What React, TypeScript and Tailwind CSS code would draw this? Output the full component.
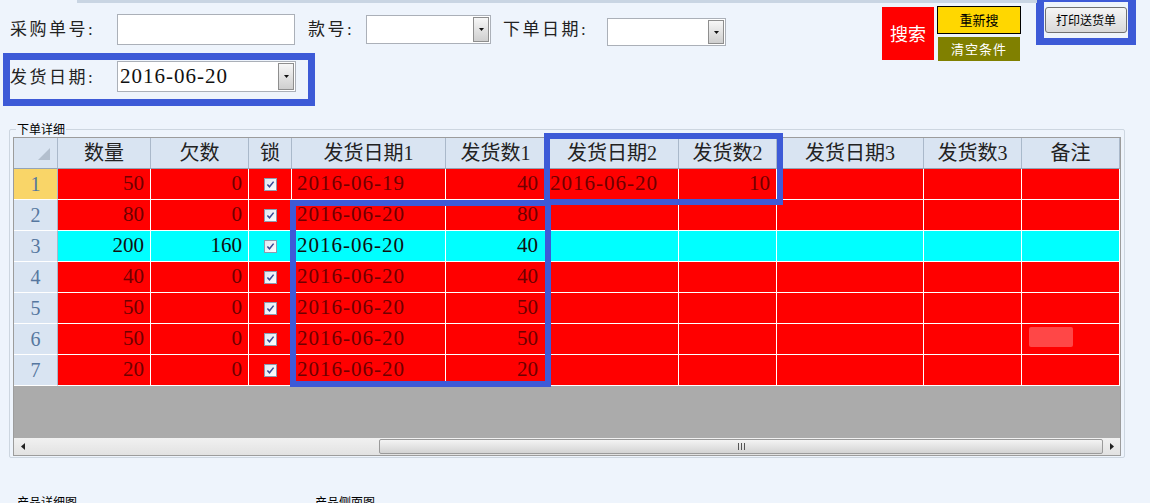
import React from 'react'

type Row = { q: string; o: string; d1: string; n1: string; d2?: string; n2?: string; cyan?: boolean; blob?: boolean }

const rows: Row[] = [
  { q: '50', o: '0', d1: '2016-06-19', n1: '40', d2: '2016-06-20', n2: '10' },
  { q: '80', o: '0', d1: '2016-06-20', n1: '80' },
  { q: '200', o: '160', d1: '2016-06-20', n1: '40', cyan: true },
  { q: '40', o: '0', d1: '2016-06-20', n1: '40' },
  { q: '50', o: '0', d1: '2016-06-20', n1: '50' },
  { q: '50', o: '0', d1: '2016-06-20', n1: '50', blob: true },
  { q: '20', o: '0', d1: '2016-06-20', n1: '20' },
]

const headers = ['数量', '欠数', '锁', '发货日期1', '发货数1', '发货日期2', '发货数2', '发货日期3', '发货数3', '备注']

const FONT = { fontFamily: '"Liberation Serif", "Noto Sans CJK SC", serif' }

function DropBtn() {
  return (
    <div className="my-[1px] mr-[1px] flex w-[16px] items-center justify-center border border-[#8e8e8e] bg-gradient-to-b from-[#f7f7f7] to-[#cfcfcf]">
      <svg width="5" height="3" viewBox="0 0 5 3">
        <polygon points="0,0 5,0 2.5,3" fill="#111" />
      </svg>
    </div>
  )
}

function Check() {
  return (
    <svg width="13" height="13" viewBox="0 0 13 13">
      <defs>
        <linearGradient id="cb" x1="0" y1="0" x2="1" y2="1">
          <stop offset="0" stopColor="#dfe6f0" />
          <stop offset="1" stopColor="#ffffff" />
        </linearGradient>
      </defs>
      <rect x="0.5" y="0.5" width="12" height="12" fill="url(#cb)" stroke="#8d9bb0" />
      <path d="M3.4 6.4 L5.5 8.8 L9.6 3.6" fill="none" stroke="#3a4a96" strokeWidth="1.5" />
    </svg>
  )
}

function Cell({ children, className = '' }: { children?: React.ReactNode; className?: string }) {
  return <div className={`flex h-[31px] items-center border-r border-b border-white ${className}`}>{children}</div>
}

export default function App() {
  return (
    <div className="relative h-[503px] w-[1150px] overflow-hidden bg-[#eef4fc] text-[#222]" style={FONT}>
      <div className="absolute top-0 left-[77px] h-[3px] w-[960px] bg-[#c9d5e3]" />

      {/* top area */}
      <div className="flex items-start">
        <div className="w-[882px] shrink-0 pl-[3px] pt-[14px]">
          <div className="flex h-[31px] items-center pl-[7px] text-[17px] tracking-[2.5px]">
            <span className="w-[107px]">采购单号:</span>
            <div className="h-[31px] w-[178px] border border-[#abb0b8] bg-white" />
            <span className="ml-[13px] w-[58px]">款号:</span>
            <div className="flex h-[29px] w-[125px] border border-[#abb0b8] bg-white">
              <div className="flex-1" />
              <DropBtn />
            </div>
            <span className="ml-[12px] w-[104px]">下单日期:</span>
            <div className="mt-[5px] flex h-[28px] w-[119px] border border-[#abb0b8] bg-white">
              <div className="flex-1" />
              <DropBtn />
            </div>
          </div>
          <div className="mt-[8px] flex h-[53px] w-[312px] items-start border-[7px] border-[#3d5ad7] pt-[1px] text-[17px]">
            <span className="mt-[4px] w-[107px] tracking-[2.5px]">发货日期:</span>
            <div className="flex h-[31px] w-[179px] border border-[#abb0b8] bg-white">
              <div className="flex flex-1 items-center pl-[2px] text-[21px] tracking-[1px] text-[#111]">2016-06-20</div>
              <DropBtn />
            </div>
          </div>
        </div>

        <div className="mt-[7px] flex h-[53px] w-[52px] items-center justify-center bg-[#ff0000] text-[18px] text-white" style={{ fontFamily: '"Noto Sans CJK SC", sans-serif' }}>
          搜索
        </div>
        <div className="ml-[3px] flex flex-col" style={{ fontFamily: '"Noto Sans CJK SC", sans-serif' }}>
          <div className="mt-[6px] flex h-[28px] w-[84px] items-center justify-center border border-black bg-[#ffd700] text-[13px] text-black">重新搜</div>
          <div className="mt-[3px] ml-[1px] flex h-[24px] w-[82px] items-center justify-center bg-[#808000] text-[13px] tracking-[1px] text-white">清空条件</div>
        </div>
        <div className="ml-[15px] flex h-[45px] w-[100px] items-start border-x-[8px] border-t-[2px] border-b-[7px] border-[#3d5ad7] bg-[#eef4fc] pt-[5px] pl-[1px]">
          <div className="flex h-[26px] w-[82px] items-center justify-center rounded-[3px] border border-[#707070] bg-gradient-to-b from-[#f5f5f5] to-[#d9d9d9] text-[12px] text-black" style={{ fontFamily: '"Noto Sans CJK SC", sans-serif' }}>
            打印送货单
          </div>
        </div>
      </div>

      {/* group box */}
      <div className="relative mt-[23px] ml-[9px] w-[1116px] rounded-[2px] border border-[#cdd6e0] pt-[7px] pb-[1px] pl-[3px]">
        <span className="absolute -top-[9px] left-[6px] bg-[#eef4fc] px-[1px] text-[12px] leading-[16px] text-black" style={{ fontFamily: '"Noto Sans CJK SC", sans-serif' }}>
          下单详细
        </span>
        <div className="w-[1108px] border border-[#9c9c9c]">
          <div className="grid grid-cols-[44px_93px_98px_43px_154px_100px_133px_98px_147px_98px_98px]">
            <div className="relative h-[31px] border-r border-b border-r-[#aab8ca] border-b-[#93a3b6] bg-[#d9e4f2]">
              <svg className="absolute top-[10px] left-[24px]" width="12" height="12" viewBox="0 0 12 12">
                <polygon points="12,0 12,12 0,12" fill="#b3bfce" />
              </svg>
            </div>
            {headers.map(h => (
              <div key={h} className="flex h-[31px] items-center justify-center border-r border-b border-r-[#aab8ca] border-b-[#93a3b6] bg-[#d9e4f2] text-[20px] text-[#222]">
                {h}
              </div>
            ))}

            {rows.map((r, i) => {
              const bg = r.cyan ? 'bg-[#00ffff] text-[#111]' : 'bg-[#ff0000] text-[#6e0000]'
              return (
                <React.Fragment key={i}>
                  <div className={`flex h-[31px] items-center justify-center border-r border-b border-r-[#aab8ca] border-b-white text-[20px] text-[#56779f] ${i === 0 ? 'bg-[#f9d568]' : 'bg-[#d9e4f2]'}`}>
                    {i + 1}
                  </div>
                  <Cell className={`${bg} justify-end pr-[6px] text-[21px]`}>{r.q}</Cell>
                  <Cell className={`${bg} justify-end pr-[6px] text-[21px]`}>{r.o}</Cell>
                  <Cell className={`${bg} justify-center`}><Check /></Cell>
                  <Cell className={`${bg} pl-[5px] text-[21px] tracking-[1px]`}>{r.d1}</Cell>
                  <Cell className={`${bg} justify-end pr-[7px] text-[21px]`}>{r.n1}</Cell>
                  <Cell className={`${bg} pl-[4px] text-[21px] tracking-[1px]`}>{r.d2}</Cell>
                  <Cell className={`${bg} justify-end pr-[6px] text-[21px]`}>{r.n2}</Cell>
                  <Cell className={bg} />
                  <Cell className={bg} />
                  <Cell className={`${bg} items-start`}>
                    {r.blob && <div className="mt-[3px] ml-[7px] h-[20px] w-[44px] rounded-[2px] bg-[#ff4747]" />}
                  </Cell>
                </React.Fragment>
              )
            })}
          </div>
          <div className="h-[52px] bg-[#ababab]" />
          <div className="flex h-[17px] bg-gradient-to-b from-[#f1f1f1] to-[#e2e2e2]">
            <div className="flex w-[17px] items-center justify-center">
              <svg width="4" height="7" viewBox="0 0 4 7">
                <polygon points="4,0 4,7 0,3.5" fill="#222" />
              </svg>
            </div>
            <div className="flex-1 pl-[348px] pt-[1px]">
              <div className="flex h-[15px] w-[724px] items-center justify-center rounded-[2px] border border-[#9a9a9a] bg-gradient-to-b from-[#f4f4f4] to-[#d3d3d3]">
                <div className="flex gap-[2px]">
                  <div className="h-[7px] w-px bg-[#555]" />
                  <div className="h-[7px] w-px bg-[#555]" />
                  <div className="h-[7px] w-px bg-[#555]" />
                </div>
              </div>
            </div>
            <div className="flex w-[17px] items-center justify-center">
              <svg width="4" height="7" viewBox="0 0 4 7">
                <polygon points="0,0 0,7 4,3.5" fill="#222" />
              </svg>
            </div>
          </div>
        </div>
      </div>

      <div className="mt-[36px] flex text-[12px] leading-[16px] text-black" style={{ fontFamily: '"Noto Sans CJK SC", sans-serif' }}>
        <span className="ml-[17px] w-[298px]">产品详细图</span>
        <span>产品侧面图</span>
      </div>

      {/* annotation boxes */}
      <div className="absolute top-[133px] left-[544px] h-[72px] w-[239px] border-[6px] border-[#3d5ad7]" />
      <div className="absolute top-[200px] left-[290px] h-[187px] w-[261px] border-[6px] border-[#3d5ad7]" />
    </div>
  )
}
